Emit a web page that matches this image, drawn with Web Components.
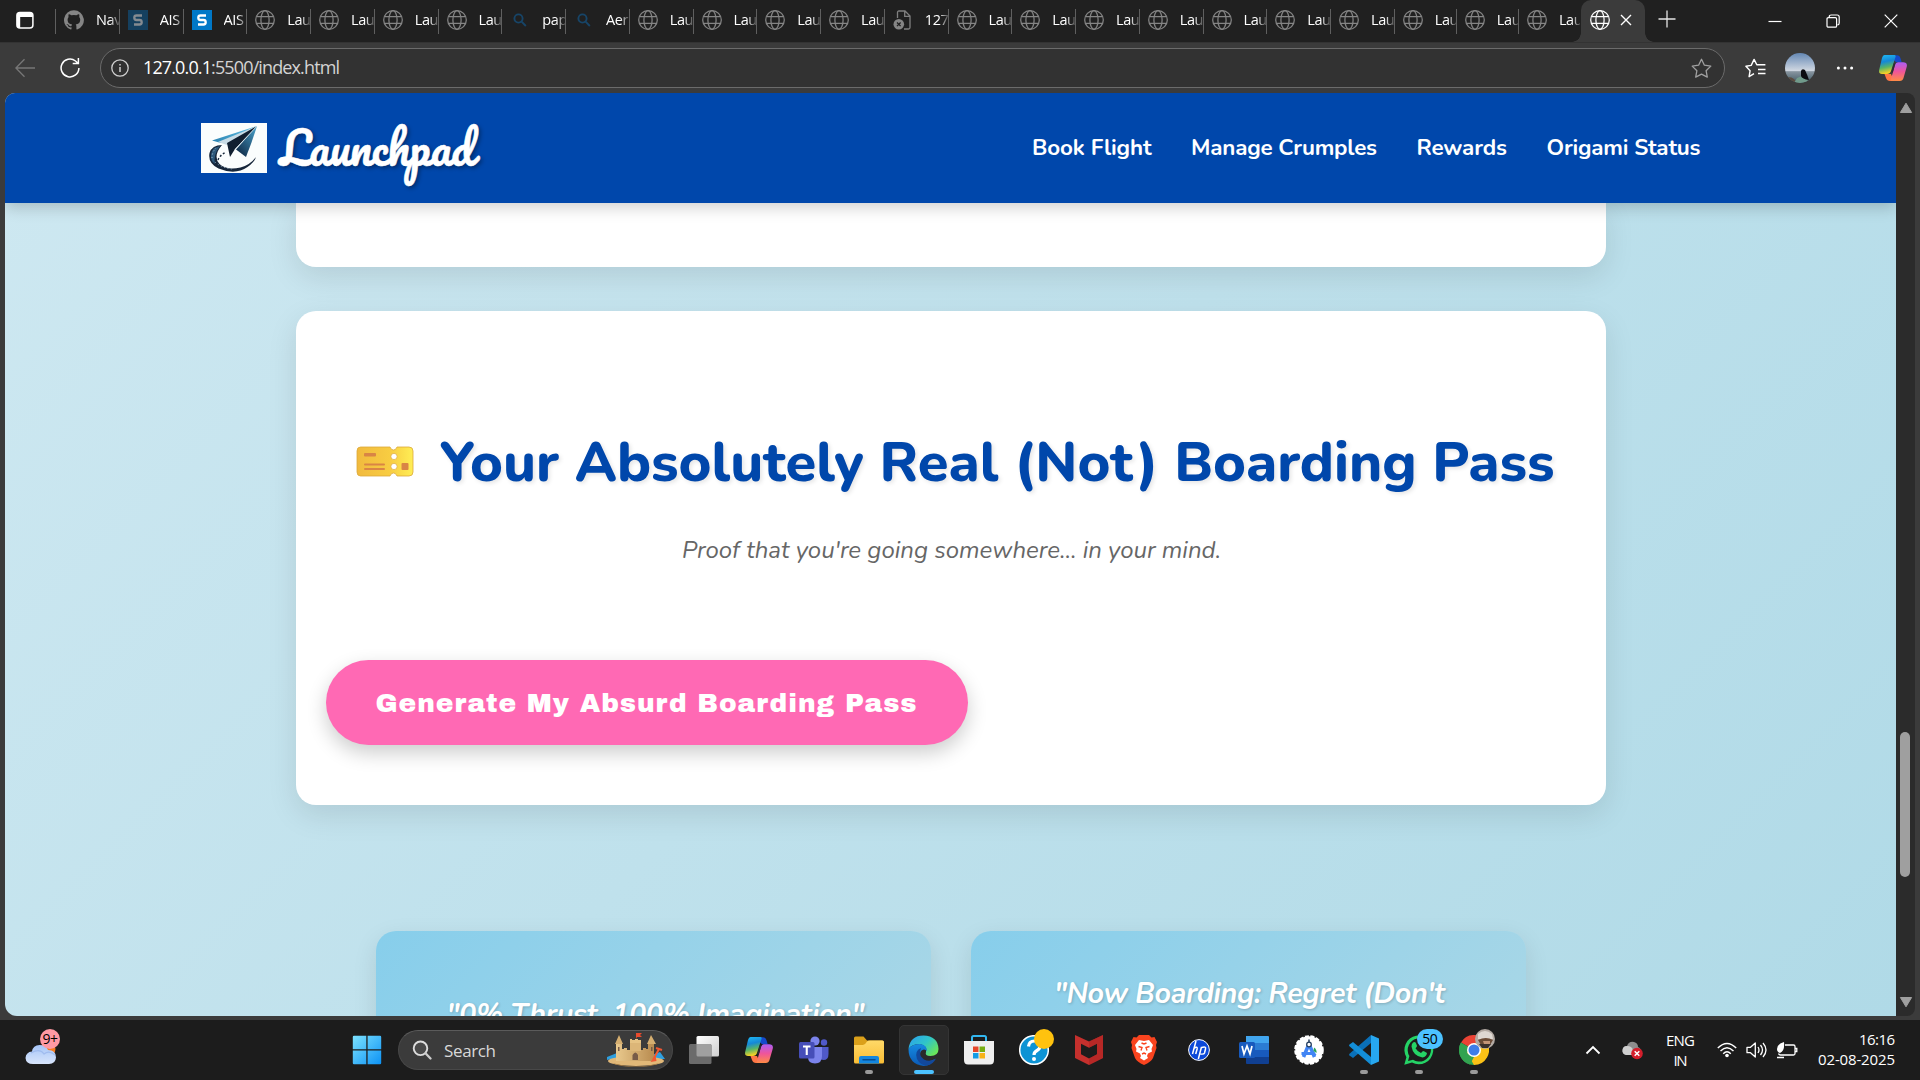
<!DOCTYPE html>
<html lang="en">
<head>
<meta charset="utf-8">
<title>Launchpad</title>
<style>
html,body{margin:0;width:1920px;height:1080px;overflow:hidden;background:#3b3b3b}
</style>
</head>
<body>
<desktop-screen></desktop-screen>
<script>
const ICONS = {
  workspace: [20,20,'<rect x="1.9" y="2.4" width="16" height="15.6" rx="3" fill="none" stroke="#fff" stroke-width="1.5"/><path d="M2 7V5q0-2.600 2.800-2.600h10.200q2.900 0 2.900 2.600v2zM2 6h3.200v12Q2 18 2 15z" fill="#fff"/>'],
  github: [20,20,'<path d="M10 .3a9.900 9.900 0 0 0-3.200 19.300c.5.1.7-.2.700-.5v-1.800c-2.800.6-3.400-1.200-3.400-1.200-.4-1.100-1.100-1.500-1.100-1.500-.9-.6.1-.6.1-.6 1 .1 1.500 1 1.500 1 .9 1.600 2.400 1.100 2.900.9.1-.7.4-1.100.6-1.400-2.200-.2-4.500-1.100-4.500-4.900 0-1.100.4-2 1-2.700-.1-.2-.4-1.200.1-2.600 0 0 .8-.3 2.700 1a9.500 9.500 0 0 1 5 0c1.900-1.300 2.700-1 2.700-1 .5 1.400.2 2.400.1 2.600.6.7 1 1.600 1 2.700 0 3.800-2.300 4.700-4.500 4.900.4.3.7.9.7 1.900v2.700c0 .3.200.6.700.5A9.900 9.900 0 0 0 10 .3z" fill="#858585"/>'],
  sdim: [20,20,'<rect width="20" height="20" fill="#15405f"/><path d="M14 5.500H8.500Q6.300 5.500 6.300 7.700T8.500 10h3q2.200 0 2.200 2.200t-2.200 2.300H6" fill="none" stroke="#858b91" stroke-width="2.300"/>'],
  slit: [20,20,'<rect width="20" height="20" fill="#0078c8"/><path d="M14 5.500H8.500Q6.300 5.500 6.300 7.700T8.500 10h3q2.200 0 2.200 2.200t-2.200 2.300H6" fill="none" stroke="#fff" stroke-width="2.300"/>'],
  globe: [20,20,'<g fill="none" stroke="currentColor" stroke-width="1.250"><circle cx="10" cy="10" r="9.300"/><ellipse cx="10" cy="10" rx="4.100" ry="9.300"/><path d="M1.500 6.700h17M1.500 13.300h17"/></g>'],
  find: [20,20,'<g fill="none" stroke="#174568" stroke-width="1.900"><circle cx="8.500" cy="8.500" r="4.100"/><path d="M11.600 11.700l4.200 4.300"/></g>'],
  badfile: [20,20,'<path d="M4.500 8V2.500q0-1.500 1.500-1.500h6l5 5v11.500q0 1.500-1.500 1.500H11M11.700 1v5.300H17" fill="none" stroke="#808080" stroke-width="1.300"/><circle cx="5.800" cy="14.300" r="5.300" fill="#858585"/><path d="M4 12.500l3.600 3.600M7.600 12.500L4 16.100" stroke="#202020" stroke-width="1.300"/>'],
  close: [14,14,'<path d="M2 2l10 10M12 2L2 12" stroke="#fff" stroke-width="1.400"/>'],
  plus: [18,18,'<path d="M.5 9h17M9 .5v17" stroke="#e4e4e4" stroke-width="1.300"/>'],
  min: [14,14,'<path d="M.5 7.500h13" stroke="#fff" stroke-width="1.200"/>'],
  max: [14,14,'<g fill="none" stroke="#fff" stroke-width="1.200"><rect x="1" y="3.600" width="9.600" height="9.600" rx="1.300"/><path d="M3.200 3.300V3q0-2 2-2h6q2 0 2 2v6q0 1.900-1.800 1.900"/></g>'],
  wclose: [14,14,'<path d="M.7.7l12.600 12.600M13.300.7L.7 13.300" stroke="#fff" stroke-width="1.200"/>'],
  back: [20,20,'<path d="M20 10H1M9.500 1.200L.9 10l8.600 8.800" fill="none" stroke="#777" stroke-width="1.300"/>'],
  reload: [20,20,'<path d="M18.900 10A8.900 8.900 0 1 1 15.500 3L18 5.300M18.400 0v5.600h-5.700" fill="none" stroke="#fff" stroke-width="1.500"/>'],
  info: [18,18,'<circle cx="9" cy="9" r="8.200" fill="none" stroke="#d0d0d0" stroke-width="1.300"/><path d="M9 8v5M9 5v1.600" stroke="#d0d0d0" stroke-width="1.500"/>'],
  star: [21,20,'<path d="M10.500 1.300l2.900 5.900 6.400.9-4.700 4.600 1.200 6.400-5.800-3-5.800 3 1.200-6.400L1.200 8.100l6.400-.9z" fill="none" stroke="#a0a0a0" stroke-width="1.300" stroke-linejoin="round"/>'],
  favs: [21,20,'<path d="M9 15.700l-4.900 3 1-6L.9 8.200l5.300-.8 2.900-6 2.700 5.400h8.600M13 11.500h7.500M13 15.500h7.500" fill="none" stroke="#fff" stroke-width="1.400" stroke-linejoin="round"/>'],
  avatar: [30,30,'<defs><clipPath id="c"><circle cx="15" cy="15" r="15"/></clipPath><linearGradient id="g" x2="0" y2="1"><stop stop-color="#6488b4"/><stop offset=".6" stop-color="#d2d9e2"/><stop offset=".62" stop-color="#8895a0"/><stop offset="1" stop-color="#405963"/></linearGradient></defs><g clip-path="url(#c)"><path d="M0 0h30v30H0z" fill="url(#g)"/><path d="M0 25q8-3 12 5H0z" fill="#5c4b3e"/><path d="M9 30l3-5 5-2 5 2 1 5z" fill="#719b8b"/><path d="M16 18q1-3 4-1 2 4 4 10-7-1-8-4z" fill="#0b0b10"/></g>'],
  dots: [18,6,'<g fill="#fff"><circle cx="2.400" cy="3" r="1.500"/><circle cx="9" cy="3" r="1.500"/><circle cx="15.600" cy="3" r="1.500"/></g>'],
  copilot: [28,26,'<defs><linearGradient id="a" x2=".2" y2="1"><stop stop-color="#20bdf5"/><stop offset=".4" stop-color="#1588d8"/><stop offset=".7" stop-color="#59b566"/><stop offset="1" stop-color="#f4d126"/></linearGradient><linearGradient id="b" x2="0" y2="1"><stop stop-color="#ab5df5"/><stop offset=".5" stop-color="#ef559a"/><stop offset="1" stop-color="#ff8b45"/></linearGradient></defs><path d="M12 .3h6q2.600 0 3.500 3l1.200 4H17L13 3z" fill="#1549cb"/><path d="M5.500 0h10q1.500 0 1 2L12 16q-1 3-4 3H3Q-1 19 .4 14L3 3Q3.800 0 5.500 0z" fill="url(#a)"/><path d="M5.500 19H12l3 7H11q-3 0-4-3z" fill="#ff7745"/><path d="M19 7.200h5q5 0 3.600 5L24.500 23q-.8 3-3.800 3H13q-1.500 0-1-2l4-14q.8-2.800 3-2.800z" fill="url(#b)"/><path d="M15.500 8.500l-2.500 9" stroke="#2b2b35" stroke-width="1.500"/>'],
  up: [14,12,'<path d="M7 1.200L12.600 10.500H1.400z" fill="#9f9f9f" stroke="#9f9f9f" stroke-linejoin="round"/>'],
  down: [14,12,'<path d="M7 10.800L12.600 1.500H1.400z" fill="#9f9f9f" stroke="#9f9f9f" stroke-linejoin="round"/>'],
  logo: [66,50,'<defs><linearGradient id="a"><stop stop-color="#2a83b2"/><stop offset="1" stop-color="#67c3e5"/></linearGradient><linearGradient id="b" x1="1" x2="0.200" y2="1"><stop stop-color="#4ba6d0"/><stop offset="1" stop-color="#0f2a47"/></linearGradient></defs><path d="M0 0h66v50H0z" fill="#fafdfd"/><path d="M21 22Q11 22 8.500 30q-2 10 9 15.500 17 7 29-1.500 7-5 8.500-10-6 8-15.500 10.500-14 3-21-3.500-7-8 2.500-19z" fill="#16263a"/><path d="M13 25q-5 6-2 13l3 3q-2-9 5-18z" fill="#2d587b"/><path d="M14 39q8 7 19 7" fill="none" stroke="#9db8ca" stroke-dasharray="1 2.500"/><path d="M11 35q0-6 4-10" fill="none" stroke="#a8c4d4" stroke-dasharray="1 2.500"/><path d="M17 37q2-5 8-8" fill="none" stroke="#16263a" stroke-width="1.400" stroke-dasharray="2 2"/><path d="M56 3L11 17.500l9 2.500z" fill="url(#a)"/><path d="M56 3L17 19l9 3z" fill="#c8dbe5"/><path d="M56 3L26 20l3 14 5-8z" fill="#111f30"/><path d="M56 3L35 26.500l10 7.500q6-15 11-31z" fill="url(#b)"/><path d="M56 3L34 26.500" stroke="#d5e6ef" stroke-width=".7"/>'],
  ticket: [58,32,'<defs><linearGradient id="a"><stop stop-color="#f1ba3e"/><stop offset=".6" stop-color="#f8cd42"/><stop offset="1" stop-color="#ffee55"/></linearGradient></defs><path d="M4.500 1H34q1 3 3.500 3T41 1h12q4 0 4 4v21q0 4-4 4H41q-1-3-3.500-3T34 30H4.500Q1 30 1 26V5q0-4 3.500-4z" fill="url(#a)" stroke="#dca83b" stroke-width=".8"/><g fill="#d98545"><rect x="8" y="7" width="12" height="3.500" rx="1"/><rect x="8" y="17.500" width="21" height="2" rx="1"/><rect x="8" y="22" width="21" height="2" rx="1"/><rect x="45.500" y="17" width="7" height="7" rx="1"/></g><g fill="#fff" stroke="#dcaa45" stroke-width=".7"><circle cx="38" cy="10.500" r="3.100"/><circle cx="38" cy="20.500" r="3.100"/></g>'],
  weather: [36,38,'<defs><linearGradient id="a" x2="0" y2="1"><stop stop-color="#a6c5f8"/><stop offset="1" stop-color="#d8e5fb"/></linearGradient></defs><circle cx="23" cy="20" r="7.500" fill="#f47b20"/><path d="M8 35q-7 0-7.500-6Q1 23 7 22.500 8 16 14.500 16T23 21q8 0 8 7.500-.5 6.500-7 6.500z" fill="url(#a)"/><path d="M6 24q9-5 13 1 5-4 11 1" fill="none" stroke="#8faee8" stroke-width="1.200" opacity=".6"/>'],
  windows: [30,30,'<defs><linearGradient id="a" x2="1" y2="1"><stop stop-color="#7ce2ff"/><stop offset="1" stop-color="#0d92f4"/></linearGradient></defs><path d="M2 .8h12.300v13.500H.8V2Q.8.8 2 .8zM15.600.8H28q1.200 0 1.200 1.200v12.300H15.600zM.8 15.600h13.500v13.600H2Q.8 29.200.8 28zM15.600 15.600h13.600V28q0 1.200-1.200 1.200H15.600z" fill="url(#a)"/>'],
  search: [20,20,'<circle cx="8.500" cy="8.300" r="6.800" fill="#4a4a4a" stroke="#ddd" stroke-width="1.900"/><path d="M13.500 13.300l5 5.200" stroke="#ccc" stroke-width="2.300" stroke-linecap="round"/>'],
  castle: [60,34,'<defs><linearGradient id="a"><stop stop-color="#e9c98d"/><stop offset="1" stop-color="#b98c50"/></linearGradient></defs><path d="M1 24l10-4 4 6H5l-4 1zM46 22l8-3 5 7H48z" fill="#2e9fdf"/><ellipse cx="30" cy="28" rx="28" ry="5" fill="#e1b878"/><path d="M6 30q24 7 48 0-8 4-24 4T6 30z" fill="#a47a42"/><path d="M10 10h6v6h2v-1h3v2h3v-2h3v2h4v-2h3v2h3v-2h3v1h2v-6h6v18H10z" fill="url(#a)"/><path d="M24 8h11v10H24z" fill="#dcb678"/><path d="M9 11l4-9 4 9zM41 11l4-9 5 9z" fill="#d5ae70"/><path d="M24 9V6h2v1h3V6h3v1h3v3H24z" fill="#e6c384"/><path d="M30 6V0h6l-2 2 2 2h-5" fill="#e94b2d"/><path d="M26.500 27v-5q3-5 5.500 0v5zM12 14h1.500v4H12zM45 14h1.500v4H45z" fill="#775b48"/><path d="M53 16L47 27" stroke="#f15a30" stroke-width="2"/><path d="M49.500 23l-5 6 6-1z" fill="#ef5733"/><path d="M50 15l6 2" stroke="#ef5733" stroke-width="2"/>'],
  taskview: [30,30,'<defs><linearGradient id="a" x2="1" y2="1"><stop stop-color="#fff"/><stop offset="1" stop-color="#cfcfcf"/></linearGradient></defs><rect x="7.500" y="1" width="22.500" height="20.500" rx="1.500" fill="url(#a)"/><rect x="0" y="9" width="22.500" height="20" rx="1.500" fill="#6b6b6b"/><path d="M7.500 9h13.500q1.500 0 1.500 1.500v11H9q-1.500 0-1.500-1.500z" fill="#a0a0a0"/>'],
  teams: [30,30,'<circle cx="16" cy="6" r="4.600" fill="#7b83eb"/><circle cx="25" cy="7.500" r="3.200" fill="#5059c9"/><path d="M20 12h9.500v7q0 6-5 6-3 0-4.500-2z" fill="#5059c9"/><path d="M9 12h14v9q0 7.500-7 7.500T9 22z" fill="#7b83eb"/><rect y="7" width="15.500" height="16.500" rx="1.500" fill="#464eb8"/><path d="M4 11.500h7.500M7.750 11.500V20" stroke="#fff" stroke-width="2.100"/>'],
  folder: [30,30,'<defs><linearGradient id="a" x2="0" y2="1"><stop stop-color="#ffd968"/><stop offset="1" stop-color="#f9bd35"/></linearGradient></defs><path d="M0 3q0-1.500 1.500-1.500h8l3.500 4H28q2 0 2 2V12H0z" fill="#dba01a"/><path d="M0 10h9q2 0 4-3.500 1-1 3-1h12.500Q30 5.500 30 7v20q0 1.500-1.500 1.500h-27Q0 28.500 0 27z" fill="url(#a)"/><path d="M5 28.500V23q0-2 2-2h16q2 0 2 2v5.500z" fill="#1386df"/><path d="M9 24.700h12" stroke="#074c91" stroke-width="1.500" stroke-linecap="round"/>'],
  edge: [31,31,'<defs><linearGradient id="a" y2=".7"><stop stop-color="#2a9df0"/><stop offset=".55" stop-color="#30c5c8"/><stop offset="1" stop-color="#69e65a"/></linearGradient><linearGradient id="b" x2="0" y2="1"><stop stop-color="#168be2"/><stop offset="1" stop-color="#0b5ab6"/></linearGradient></defs><path d="M.5 14Q2 .5 15.500.5 30 1 30.500 14q0 7-8 7-6 0-4.500-4Q20 11 12 9 4 9 .5 14z" fill="url(#a)"/><path d="M.5 14Q4 9 12 9q7 1 7 7-3-3-6 0-3 5 2 9 5 3 12-1-4 7-11.500 7Q.5 29 .5 14z" fill="url(#b)"/><path d="M13 13q-7 3-4 11 3 6 10 6.500 6-1 9-7-6 4-12 1-6-4-3-11.500z" fill="#12489b"/>'],
  store: [30,30,'<path d="M8 7V2.500Q8 1 9.500 1h11Q22 1 22 2.500V7" fill="none" stroke="#32b7f0" stroke-width="2"/><path d="M0 6h30v19q0 4.500-4 4.500H4Q0 29.500 0 25z" fill="#efefef"/><path d="M9 11.500h5.500V17H9z" fill="#e5482a"/><path d="M15.500 11.500H21V17h-5.500z" fill="#76ad12"/><path d="M9 18h5.500v5.500H9z" fill="#139ce6"/><path d="M15.500 18H21v5.500h-5.500z" fill="#f6b31a"/>'],
  help: [30,30,'<circle cx="15" cy="15" r="14.300" fill="#0d93d4" stroke="#fff" stroke-width="1.500"/><path d="M9.500 11.500Q10 6 15.500 6t5.500 5q0 3-3 4.500-3 1.600-3 4.500" fill="none" stroke="#fff" stroke-width="3.200"/><circle cx="15" cy="24" r="2" fill="#fff"/>'],
  mcafee: [28,30,'<path d="M0 0l14 6.500L28 0v23l-14 7L0 23z" fill="#c5302d"/><path d="M6 8.800l8 4 8-4v10.500l-8 4.200-8-4.200z" fill="#1c1c1c"/><path d="M28 0v23l-14 7v-6.500l8-4.200V8.800l-8 4V6.500z" fill="#a92020" opacity=".5"/>'],
  brave: [26,30,'<path d="M8 0h10l2.500 2.500 3-.4L26 7l-1 3 .5 3-3.500 10q-2 4-9 7-7-3-9-7L.5 13 1 10 0 7l2.500-4.900 3 .4z" fill="#f9441f"/><path d="M8 5l5 1 5-1 4 5-1.500 4 .5 2.500-4 2-1 2.500 1 2-4 2.500-4-2.500 1-2-1-2.500-4-2 .5-2.500L4 10z" fill="#fff"/><path d="M7.500 11.500l3.500 1-1 3M18.500 11.500l-3.500 1 1 3M10.500 8l2.500 1 2.500-1M11 19l2-1 2 1" fill="none" stroke="#f9441f" stroke-width="1.400"/>'],
  hp: [22,22,'<circle cx="11" cy="11" r="10.400" fill="#0b48d8" stroke="#fff" stroke-width="1"/><path d="M8 2L4.500 15M6.300 9q3.500-2 2.800 1L7.700 15M13.500 8L10.300 20M13.500 8.500q5-1.500 4 1.500l-1 4q-.5 1.500-4 1" fill="none" stroke="#fff" stroke-width="1.500"/>'],
  word: [30,30,'<path d="M7 1h22q1 0 1 1v6H7z" fill="#41a5ee"/><path d="M7 8h23v7H7z" fill="#2b7cd3"/><path d="M7 15h23v7H7z" fill="#185abd"/><path d="M7 22h23v6q0 1-1 1H8q-1 0-1-1z" fill="#103f91"/><rect y="7" width="16" height="16" rx="1.500" fill="#185abd"/><path d="M3 11l2 8 3-8 3 8 2-8" fill="none" stroke="#fff" stroke-width="1.700"/>'],
  studio: [30,30,'<circle cx="15" cy="15" r="13.800" fill="#fff" stroke="#fff" stroke-width="2" stroke-dasharray="4 1.500"/><path d="M15 9l-5.500 13M15 9l5.500 13" fill="none" stroke="#4285f4" stroke-width="3.600"/><path d="M7.500 17h13l2 3h-15z" fill="#4285f4"/><path d="M20 12.500q3 2 2.500 5.500l-3-2z" fill="#28a35a"/><circle cx="15" cy="9.500" r="2.300" fill="#fff" stroke="#274060" stroke-width="1.300"/><path d="M15 4.500V7.500" stroke="#274060" stroke-width="1.500"/>'],
  vscode: [30,30,'<path d="M22 0l8 3.500v23L22 30z" fill="#27a7ef"/><path d="M22 0v8L4 23l-3.500-2.500q-.8-1 0-1.800z" fill="#0a70b8"/><path d="M22 30v-8L4 7 .5 9.500q-.8 1 0 1.800z" fill="#138ed7"/>'],
  whatsapp: [30,30,'<path d="M.3 29.700l2.100-7.500A14.400 14.400 0 1 1 8 27.600z" fill="#25d366"/><path d="M4 26l1.400-5A11.600 11.600 0 1 1 9 24.700z" fill="#1c1c1c"/><path d="M9 7.500q2-1.500 3 .8l1 2.500q0 1-1.500 2.500 2.500 4 5.500 4.800l2-2q1 0 4 2-.5 4-4.500 4.400Q9 21 7.500 11.500 7.500 9 9 7.500z" fill="#25d366"/>'],
  chrome: [30,30,'<path d="M15 15L2 7.500A15 15 0 0 1 28 7.500z" fill="#ea4335"/><path d="M15 15L28 7.500A15 15 0 0 1 15 30z" fill="#fbc116"/><path d="M15 15v15A15 15 0 0 1 2 7.500z" fill="#32a350"/><path d="M15 8h13L21.500 18.500 15 30 8 18z" fill="#fbc116"/><path d="M2 7.500L8.500 18.500 15 22l-4 7.500A15 15 0 0 1 2 7.500z" fill="#32a350"/><circle cx="15" cy="15" r="7" fill="#fff"/><circle cx="15" cy="15" r="5.500" fill="#3f7de8"/>'],
  face: [20,20,'<circle cx="10" cy="10" r="10" fill="#b3aaa3"/><path d="M3 5q7-6 14 0l1 5H3z" fill="#ded8d2"/><path d="M3 11q8-4 15 0l-3 5H6z" fill="#6b4c37"/><path d="M4 15h12l-3 4H7z" fill="#3a302c"/><path d="M8 12h7v3H9z" fill="#c49577"/>'],
  chevron: [16,10,'<path d="M1.500 8.500L8 2l6.500 6.500" fill="none" stroke="#fff" stroke-width="1.800"/>'],
  cloud: [22,20,'<path d="M4 15q-4-1-3.500-5Q1 6 5 6q2-5 7-4 4 1 4 5 3 1 3 5l-5 3z" fill="#8d8d8d"/><path d="M4 15q-4-1-3.500-5Q1 6 5 6q5 0 6 4l3 5z" fill="#cfcfcf"/><circle cx="15" cy="13.500" r="5.800" fill="#d41e2b"/><path d="M12.700 11.200l4.600 4.600M17.300 11.200l-4.600 4.600" stroke="#fff" stroke-width="1.500"/>'],
  wifi: [20,16,'<g fill="none" stroke="#fff" stroke-width="1.400"><path d="M.8 6q9.200-9 18.400 0M3.500 9q6.500-6.500 13 0M6.200 11.800q3.800-4 7.600 0"/></g><circle cx="10" cy="13.500" r="1.800" fill="#fff"/>'],
  sound: [21,18,'<g fill="none" stroke="#fff" stroke-width="1.300" stroke-linejoin="round"><path d="M1 6.300h3.500L9.300 2v14L4.500 11.700H1z"/><path d="M12 6q2 3 0 6M14.500 4q4 5 0 10M17 2q6 7 0 14"/></g>'],
  battery: [22,18,'<path d="M9 4h8.500q1.500 0 1.500 1.500v7q0 1.500-1.500 1.500H4.500Q3 14 2.500 12.500M19.500 7.500h1.300v3h-1.300M1 16.500h7" fill="none" stroke="#fff" stroke-width="1.300"/><path d="M8 1Q1 3 1 8q0 3 3 4Q9 10 8 1zM3 14l3-8" fill="#fff"/>']
};

/* Registers an element whose shadow root is cloned from a template. */
function element(name, css, html, init) {
  const t = document.createElement('template');
  customElements.define(name, class extends HTMLElement {
    constructor() { super(); this.attachShadow({mode: 'open'}); }
    connectedCallback() {
      if (this.shadowRoot.childNodes.length) return;
      t.innerHTML = '<style>:host{display:block;box-sizing:border-box}' + css + '</style>' + (typeof html === 'function' ? html(this) : html);
      this.shadowRoot.append(t.content.cloneNode(true));
      if (init) init(this);
    }
  });
}

element('ui-icon', ':host{display:block;flex:none;line-height:0}svg{display:block}', h => {
  const [w, ht, body] = ICONS[h.getAttribute('name')];
  return `<svg width="${w}" height="${ht}" viewBox="0 0 ${w} ${ht}">${body}</svg>`;
});

element('browser-tab',
  `:host{flex:none;width:63.750px;height:25px;display:flex;align-items:center;border-left:1.500px solid #5f5f5f;padding:0 0 3px 8px;gap:12px;color:#858585;overflow:hidden}
   :host([narrow]){width:62.100px}
   span{flex:1;overflow:hidden;white-space:nowrap;font:14.500px/20px "Open Sans","Noto Sans",sans-serif;letter-spacing:-.4px;color:#fff;-webkit-mask:linear-gradient(90deg,#000 60%,#0003)}`,
  h => `<ui-icon name="${h.getAttribute('icon') || 'globe'}"></ui-icon><span><slot></slot></span>`);

const tabs = [['github','Nav'],['sdim','AIS'],['slit','AIS'],...Array(4).fill(['globe','Lau']),['find','pap'],['find','Aer'],
  ...Array(4).fill(['globe','Lau']),['badfile','127'],...Array(10).fill(['globe','Lau'])];

element('tab-strip',
  `:host{display:flex;height:42px;background:#202020;align-items:flex-start}
   .ws{margin:10px 20px 0 15px}
   .tabs{display:flex;width:1526px;padding-top:9px}
   .active{width:64px;height:42px;background:#3b3b3b;border-radius:10px 10px 0 0;color:#fff;display:flex;align-items:center;gap:9px;padding:0 0 2px 9px;box-sizing:border-box;position:relative}
   .active::before,.active::after{content:"";position:absolute;bottom:0;width:9px;height:9px}
   .active::before{left:-9px;background:radial-gradient(circle at 0 0,transparent 8.500px,#3b3b3b 9px)}
   .active::after{right:-9px;background:radial-gradient(circle at 100% 0,transparent 8.500px,#3b3b3b 9px)}
   .new{margin:10px 92px 0 13px}
   .win{display:flex;gap:44px;padding-top:14px}`,
  `<ui-icon class="ws" name="workspace"></ui-icon><div class="tabs">${tabs.map((t, i) => `<browser-tab icon="${t[0]}"${i > 20 ? ' narrow' : ''}>${t[1]}</browser-tab>`).join('')}</div>
   <div class="active"><ui-icon name="globe"></ui-icon><ui-icon name="close"></ui-icon></div>
   <ui-icon class="new" name="plus"></ui-icon>
   <div class="win"><ui-icon name="min"></ui-icon><ui-icon name="max"></ui-icon><ui-icon name="wclose"></ui-icon></div>`);

element('address-bar',
  `:host{display:flex;height:51px;background:#3b3b3b;border-top:1px solid #333;align-items:center;padding:0 13px 1px 15px}
   .re{margin:0 20px 0 25px}
   .box{display:flex;align-items:center;flex:none;width:1625px;height:40px;border:1.500px solid #6b6b6b;border-radius:20px;background:#323232;box-sizing:border-box;padding:0 12px 0 10px;margin-right:20px;font:18px/26px "Open Sans","Noto Sans",sans-serif;color:#d4d4d4}
   .url{margin:-2px auto 0 14px;height:26px}.url b{font-weight:400;color:#fff}
   .av{margin:0 21px 0 19px}.dots{margin-right:25px}`,
  `<ui-icon name="back"></ui-icon><ui-icon class="re" name="reload"></ui-icon>
   <div class="box"><ui-icon name="info"></ui-icon><fit-text class="url" w="197"><b>127.0.0.1</b>:5500/index.html</fit-text><ui-icon name="star"></ui-icon></div>
   <ui-icon name="favs"></ui-icon><ui-icon class="av" name="avatar"></ui-icon><ui-icon class="dots" name="dots"></ui-icon><ui-icon name="copilot"></ui-icon>`);

element('site-header',
  `:host{height:110px;background:#0047ab;box-shadow:0 4px 15px rgba(0,0,0,.2);position:relative;z-index:2;flex:none}
   .in{width:1500px;height:110px;margin:auto;display:flex;align-items:center;color:#fff}
   .brand{margin:-3px auto 0 13px;font:400 44.800px/60px Pacifico,Lato,sans-serif;-webkit-text-stroke:.5px #fff;text-shadow:2px 2px 4px rgba(0,0,0,.4)}
   nav{display:flex;gap:39.500px;font:750 22.400px/30px Nunito,Lato,sans-serif}`,
  `<div class="in"><ui-icon name="logo"></ui-icon><fit-text class="brand" w="193.5">Launchpad</fit-text>
   <nav><fit-text w="119.5">Book Flight</fit-text><fit-text w="186">Manage Crumples</fit-text><fit-text w="90.5">Rewards</fit-text><fit-text w="154">Origami Status</fit-text></nav></div>`);

element('content-card',
  `:host{width:1310px;background:#fff;box-shadow:0 10px 30px rgba(0,0,0,.1);border-radius:20px;flex:none}
   :host(.tail){height:64px;border-radius:0 0 20px 20px;margin-bottom:44px}
   :host(.main){height:494px;margin-bottom:126px}`, '<slot></slot>');

element('boarding-pass',
  `:host{display:flex;flex-direction:column;padding:112px 30px 0;height:100%}
   h2{margin:0;height:80px;padding:0 21px 0 30px;display:flex;align-items:center;justify-content:space-between;color:#0047ab;font:800 56px/80px Nunito,Lato,sans-serif;text-shadow:2px 2px 4px rgba(0,0,0,.1)}
   h2 ui-icon{margin-top:-3px}
   p{margin:29px 0 0;height:36px;padding-left:2px;text-align:center;color:#666;font:italic 400 24px/36px Nunito,Lato,sans-serif}
   button{margin:92px 0 0;width:642px;height:85px;border:0;border-radius:50px;background:#ff69b4;color:#fff;box-shadow:0 8px 20px rgba(0,0,0,.2);font:400 26.500px/36px "Archivo Black","Arial Black",Inter,sans-serif;padding:3px 1px 0 0;text-align:center}`,
  `<h2><ui-icon name="ticket"></ui-icon><fit-text w="1115">Your Absolutely Real (Not) Boarding Pass</fit-text></h2>
   <p><fit-text w="539">Proof that you're going somewhere... in your mind.</fit-text></p>
   <button><fit-text w="541">Generate My Absurd Boarding Pass</fit-text></button>`);

element('quote-card',
  `:host{width:555px;height:190px;flex:none;border-radius:20px;background:linear-gradient(135deg,#87ceeb,#add8e6);box-shadow:0 8px 25px rgba(0,0,0,.1);color:#fff;text-align:center;font:italic 750 28.800px/43px Nunito,Lato,sans-serif;text-shadow:1px 1px 3px rgba(0,0,0,.2)}
   :host([lines="1"]){padding:62px 0 0 5px}:host([lines="2"]){padding:41px 0 0 3px}`, '<slot></slot>');

element('scroll-bar',
  `:host{width:19px;background:#2b2b2b;display:flex;flex-direction:column;align-items:center;border-radius:0 8px 8px 0}
   .t{width:10px;height:145px;border-radius:5px;background:#9f9f9f;margin:618px 0 119px -1px}
   .u{margin-top:9px}`,
  `<ui-icon class="u" name="up"></ui-icon><div class="t"></div><ui-icon name="down"></ui-icon>`);

element('page-view',
  `:host{display:flex;height:923px;padding:0 5px}
   main{width:1891px;height:922.500px;overflow:hidden;display:flex;flex-direction:column;align-items:center;border-radius:10px 0 0 12px;background:linear-gradient(135deg,#cee8f1,#b0dae7)}
   site-header{width:100%}
   .quotes{display:flex;gap:40px}`,
  `<main><site-header></site-header><content-card class="tail"></content-card>
   <content-card class="main"><boarding-pass></boarding-pass></content-card>
   <div class="quotes"><quote-card lines="1"><fit-text w="418">"0% Thrust, 100% Imagination"</fit-text></quote-card>
   <quote-card lines="2"><fit-text w="391">"Now Boarding: Regret (Don't</fit-text></quote-card></div></main>
   <scroll-bar></scroll-bar>`);

element('task-app',
  `:host{width:55.070px;height:60px;display:flex;align-items:center;justify-content:center;position:relative;flex:none}
   :host([active])::before{content:"";position:absolute;left:2.500px;top:5px;width:48px;height:48px;border:1px solid #343434;border-radius:5px;background:#2a2a2a}
   ui-icon{position:relative}
   :host([run])::after{content:"";position:absolute;left:50%;margin-left:-4px;top:50px;width:8px;height:4px;border-radius:2px;background:#9a9a9a}
   :host([active])::after{width:20px;margin-left:-10px;background:#4cc2ff}
   ::slotted(*){position:absolute;left:28px;top:9px}
   ::slotted(.wide){left:25px}`,
  h => `<ui-icon name="${h.getAttribute('icon')}"></ui-icon><slot></slot>`);

element('count-badge',
  `:host{min-width:20px;height:20px;border-radius:10px;background:#4cc2ff;color:#000;font:14px/19px "Open Sans","Noto Sans",sans-serif;text-align:center;letter-spacing:-.5px}
   :host(.pink){background:#ff99a4}:host(.wide){width:26px}:host(.dot){background:#ffc20e}`, '<slot></slot>');

element('task-bar',
  `:host{display:flex;height:60px;background:#1c1c1c;box-sizing:border-box;align-items:center;color:#fff;font:15px/20px "Open Sans","Noto Sans",sans-serif;padding:0 25px 0 25px}
   .w{position:relative;margin:-4px 291px 0 0}.w count-badge{position:absolute;left:15px;top:0}
   .search{display:flex;align-items:center;width:275px;height:40px;margin:0 3px 0 16px;border:1px solid #484848;border-top-color:#5b5b5b;border-radius:20px;background:#3b3b3b;box-sizing:border-box;padding:0 6px 0 13px;color:#d8d8d8;font-size:17px}
   .search fit-text{margin:2px auto 0 12px}
   .chev{margin:0 21px 0 83px}.lang{width:29px;margin:0 22px 0 22px;text-align:center;display:flex;flex-direction:column;align-items:center}
   .tray{display:flex;gap:9px;align-items:center;margin-right:auto}
   .clock{display:flex;flex-direction:column;align-items:flex-end;margin-top:-2px}`,
  `<div class="w"><ui-icon name="weather"></ui-icon><count-badge class="pink">9+</count-badge></div>
   <ui-icon name="windows"></ui-icon>
   <div class="search"><ui-icon name="search"></ui-icon><fit-text w="52">Search</fit-text><ui-icon name="castle"></ui-icon></div>
   <task-app icon="taskview"></task-app><task-app icon="copilot"></task-app><task-app icon="teams"></task-app><task-app icon="folder" run></task-app>
   <task-app icon="edge" run active></task-app><task-app icon="store"></task-app><task-app icon="help"><count-badge class="dot"></count-badge></task-app>
   <task-app icon="mcafee"></task-app><task-app icon="brave"></task-app><task-app icon="hp"></task-app><task-app icon="word"></task-app>
   <task-app icon="studio"></task-app><task-app icon="vscode" run></task-app><task-app icon="whatsapp" run><count-badge class="wide">50</count-badge></task-app>
   <task-app icon="chrome" run><ui-icon name="face"></ui-icon></task-app>
   <ui-icon class="chev" name="chevron"></ui-icon><ui-icon name="cloud"></ui-icon>
   <div class="lang"><fit-text w="29">ENG</fit-text><fit-text w="14">IN</fit-text></div>
   <div class="tray"><ui-icon name="wifi"></ui-icon><ui-icon name="sound"></ui-icon><ui-icon name="battery"></ui-icon></div>
   <div class="clock"><fit-text w="36">16:16</fit-text><fit-text w="77">02-08-2025</fit-text></div>`);

element('desktop-screen',
  `:host{display:flex;flex-direction:column;width:1920px;height:1080px;background:#3b3b3b}
   task-bar{margin-top:auto}`,
  `<tab-strip></tab-strip><address-bar></address-bar><page-view></page-view><task-bar></task-bar>`);

/* Tracks its text so that the line takes exactly the width given in w. */
element('fit-text', ':host{display:inline-block;white-space:nowrap}span{display:inline-block}', '<span><slot></slot></span>', h => {
  const s = h.shadowRoot.querySelector('span');
  const w = +h.getAttribute('w'), n = h.textContent.length;
  const ls = (w - s.getBoundingClientRect().width) / (n - 1);
  s.style.letterSpacing = ls + 'px';
  s.style.marginRight = -ls + 'px';
});
</script>
</body>
</html>
